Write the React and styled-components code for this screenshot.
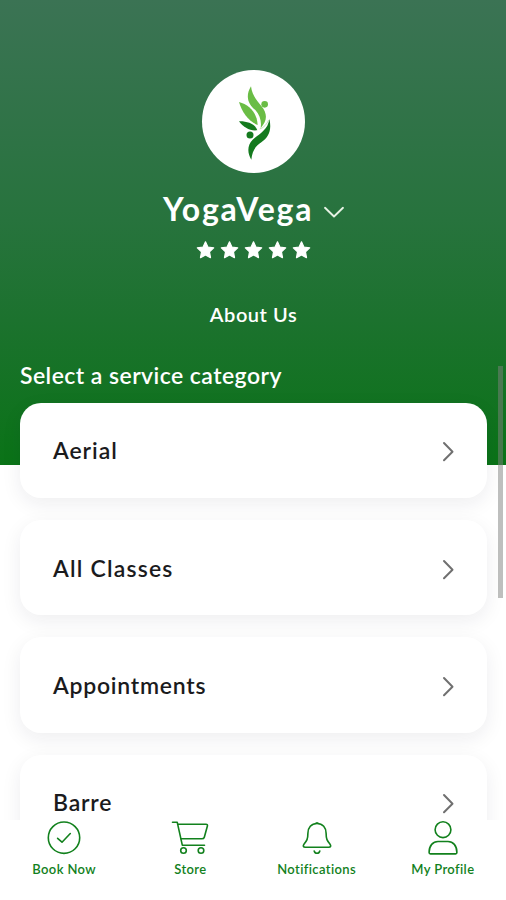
import React from 'react'
import styled, { createGlobalStyle } from 'styled-components'

const GlobalStyle = createGlobalStyle`
  * {
    box-sizing: border-box;
  }
  body {
    margin: 0;
    overflow: hidden;
    background: #fff;
    font-family: Lato, 'Open Sans', sans-serif;
  }
`

const Screen = styled.div`
  display: flex;
  flex-direction: column;
  position: relative;
  width: 506px;
  height: 900px;
  overflow: hidden;
  background: linear-gradient(#3b7354 0, #27733d 220px, #1c722e 320px, #0a7317 465px, #fff 465px);
`

const Content = styled.main`
  height: 820px;
  overflow: hidden;
`

const Header = styled.header`
  display: flex;
  flex-direction: column;
  align-items: center;
  height: 361px;
  padding-top: 70px;
  color: #fff;
`

const Avatar = styled.div`
  display: flex;
  width: 103px;
  height: 103px;
  border-radius: 50%;
  background: #fff;
`

const Studio = styled.div`
  display: flex;
  align-items: center;
  gap: 10px;
  height: 38px;
  margin: 17px 0 0 1px;
`

const Name = styled.h1`
  margin: 0;
  width: 151px;
  font-size: 32px;
  font-weight: 700;
  line-height: 38px;
  letter-spacing: 1.75px;
  white-space: nowrap;
`

const Stars = styled.div`
  display: flex;
  gap: 4px;
  height: 20px;
  margin-top: 12px;
`

const About = styled.a`
  margin: 41px 0 0 1px;
  font-size: 20px;
  font-weight: 600;
  line-height: 26px;
  letter-spacing: 0.55px;
`

const SectionTitle = styled.h2`
  margin: 0 0 0 20px;
  height: 41px;
  color: #fff;
  font-size: 23px;
  font-weight: 600;
  line-height: 28px;
  letter-spacing: 0.45px;
`

const List = styled.div`
  display: flex;
  flex-direction: column;
  gap: 22px;
  padding: 0.5px 19.5px 0 20px;
`

const Card = styled.div`
  display: flex;
  flex: none;
  align-items: center;
  justify-content: space-between;
  height: 95.4px;
  padding: 0 33px;
  border-radius: 21px;
  background: #fff;
  box-shadow: 0 6px 20px rgba(30, 30, 60, 0.075);
`

const CardLabel = styled.span`
  color: #1b1b1d;
  font-size: 23px;
  font-weight: 600;
  line-height: 30px;
  letter-spacing: ${({ $spacing }) => $spacing}px;
`

const Scrollbar = styled.div`
  position: absolute;
  top: 366px;
  right: 3px;
  width: 5px;
  height: 232px;
  background: rgba(125, 128, 126, 0.5);
`

const Nav = styled.nav`
  display: flex;
  height: 80px;
  padding-left: 1px;
  background: #fff;
`

const NavItem = styled.a`
  display: flex;
  flex: 1;
  flex-direction: column;
  align-items: center;
  gap: 4px;
  color: #12811d;
`

const NavLabel = styled.span`
  font-size: 13px;
  font-weight: 600;
  line-height: 18px;
  letter-spacing: 0.38px;
  white-space: nowrap;
`

const Icon = styled.svg`
  display: block;
  flex: none;
  overflow: visible;
  fill: none;
  stroke: currentColor;
  stroke-width: ${({ $weight = 1.6 }) => $weight};
  stroke-linecap: round;
  stroke-linejoin: round;
`

const LeafLogo = () => (
  <svg width="103" height="103" viewBox="27 30 309 309">
    <g fill="#6abd45">
      <path d="M174 79 C177 105 190 120 205 138 C226 163 221 185 203 204 C206 184 201 166 187 150 C167 134 155 110 174 79Z" />
      <path d="M138 126 C168 134 192 158 194 195 C167 184 147 157 138 126Z" />
      <circle cx="215" cy="133" r="10" />
    </g>
    <g fill="#147a1e">
      <path d="M138 184 C162 183 187 192 193 211 C171 214 151 202 138 184Z" />
      <path d="M229 177 C237 209 227 232 206 246 C188 258 178 271 175 299 C162 279 163 255 179 239 C199 221 225 210 229 177Z" />
      <circle cx="171" cy="225" r="10.5" />
    </g>
    <path d="M200 207 C213 203 222 192 227 180" fill="none" stroke="#a5d492" strokeWidth="2" />
  </svg>
)

const Star = () => (
  <svg width="20" height="20" viewBox="0 0 20 20">
    <path
      d="M10.5 1.8 L12.9 7 L18.7 7.8 L14.5 11.8 L15.5 17.7 L10.5 14.9 L5.5 17.7 L6.5 11.8 L2.3 7.8 L8.1 7Z"
      fill="#fff"
      stroke="#fff"
      strokeWidth="1.2"
      strokeLinejoin="round"
    />
  </svg>
)

const CheckIcon = () => (
  <Icon width="36" height="36" viewBox="0 0 36 36">
    <circle cx="18" cy="17.7" r="15.7" />
    <path d="M11.6 18.3 L16 22.2 L24.3 13.5" />
  </Icon>
)

const CartIcon = () => (
  <Icon width="36" height="36" viewBox="0 0 36 36">
    <path d="M0.5 2.2 H5.2 L10.3 25.2 H32.5" />
    <path d="M6 4.3 H34 Q35.9 4.3 35.4 6 L32.3 17.2 Q31.9 18.8 29.8 18.8 H9" />
    <circle cx="11.5" cy="30.5" r="2.8" />
    <circle cx="29" cy="30.5" r="2.8" />
  </Icon>
)

const BellIcon = () => (
  <Icon width="36" height="36" viewBox="0 0 36 36">
    <path d="M18 3.5 C12.2 3.5 8.9 7.8 8.9 13.3 C8.9 19.2 7.8 20.8 5.1 24 C3.6 26 4.3 27.2 6.3 27.2 H29.7 C31.7 27.2 32.4 26 30.9 24 C28.2 20.8 27.1 19.2 27.1 13.3 C27.1 7.8 23.8 3.5 18 3.5Z" />
    <path d="M17.2 3 H18.8 M15.2 31 Q15.8 33.3 18 33.3 Q20.2 33.3 20.8 31" />
  </Icon>
)

const ProfileIcon = () => (
  <Icon width="36" height="36" viewBox="0 0 36 36">
    <circle cx="18" cy="9.7" r="7.9" />
    <path d="M4.1 32.6 C4.1 25.5 8 21.5 13 21.5 H23 C28 21.5 31.9 25.5 31.9 32.6 Q31.9 33.9 30.6 33.9 H5.4 Q4.1 33.9 4.1 32.6Z" />
  </Icon>
)

const categories = [
  { label: 'Aerial', spacing: 0.95 },
  { label: 'All Classes', spacing: 1.2 },
  { label: 'Appointments', spacing: 0.75 },
  { label: 'Barre', spacing: 0.8 },
]

const tabs = [
  { label: 'Book Now', icon: CheckIcon },
  { label: 'Store', icon: CartIcon },
  { label: 'Notifications', icon: BellIcon },
  { label: 'My Profile', icon: ProfileIcon },
]

const App = () => {
  return (
    <Screen>
      <GlobalStyle />
      <Content>
        <Header>
          <Avatar>
            <LeafLogo />
          </Avatar>
          <Studio>
            <Name>YogaVega</Name>
            <Icon width="20" height="12" viewBox="0 0 20 12" color="#e6f2e4" $weight={1.9}>
              <path d="M1 4.8 L10 13.5 L19 4.8" />
            </Icon>
          </Studio>
          <Stars>
            {[1, 2, 3, 4, 5].map((n) => (
              <Star key={n} />
            ))}
          </Stars>
          <About>About Us</About>
        </Header>
        <SectionTitle>Select a service category</SectionTitle>
        <List>
          {categories.map(({ label, spacing }) => (
            <Card key={label}>
              <CardLabel $spacing={spacing}>{label}</CardLabel>
              <Icon width="12" height="20" viewBox="0 0 12 20" color="#707070" $weight={2}>
                <path d="M2 3 L10.5 11.7 L2 20.2" />
              </Icon>
            </Card>
          ))}
        </List>
      </Content>
      <Nav>
        {tabs.map(({ label, icon: TabIcon }) => (
          <NavItem key={label}>
            <TabIcon />
            <NavLabel>{label}</NavLabel>
          </NavItem>
        ))}
      </Nav>
      <Scrollbar />
    </Screen>
  )
}

export default App
